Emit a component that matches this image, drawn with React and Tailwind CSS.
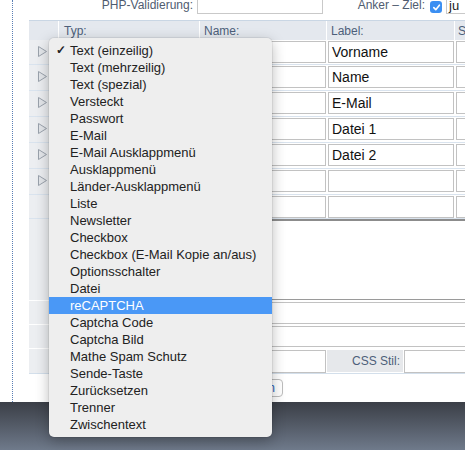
import React from 'react';

const menuItems = [
  'Text (einzeilig)',
  'Text (mehrzeilig)',
  'Text (spezial)',
  'Versteckt',
  'Passwort',
  'E-Mail',
  'E-Mail Ausklappmenü',
  'Ausklappmenü',
  'Länder-Ausklappmenü',
  'Liste',
  'Newsletter',
  'Checkbox',
  'Checkbox (E-Mail Kopie an/aus)',
  'Optionsschalter',
  'Datei',
  'reCAPTCHA',
  'Captcha Code',
  'Captcha Bild',
  'Mathe Spam Schutz',
  'Sende-Taste',
  'Zurücksetzen',
  'Trenner',
  'Zwischentext',
];

const rows = [
  { label: 'Vorname', h: 'h-[25px]', arrow: true },
  { label: 'Name', h: 'h-[26px]', arrow: true },
  { label: 'E-Mail', h: 'h-[26px]', arrow: true },
  { label: 'Datei 1', h: 'h-[26px]', arrow: true },
  { label: 'Datei 2', h: 'h-[26px]', arrow: true },
  { label: '', h: 'h-[26px]', arrow: true },
  { label: '', h: 'h-[24px]', arrow: false },
];

const Arrow = () => (
  <svg width="9" height="11" viewBox="0 0 9 11">
    <polygon points="0.5,0.5 8.5,5.5 0.5,10.5" fill="#e3e6ea" stroke="#9aa2ac" strokeWidth="1" />
  </svg>
);

const Box = ({ className = '', children }) => (
  <div className={`border border-[#c2c2c2] bg-white ${className}`}>{children}</div>
);

const App = () => {
  return (
    <div className="w-[465px] h-[450px] relative overflow-hidden bg-white font-['Liberation_Sans',Arial,sans-serif]">
      <div className="h-[402px] ml-[12px] border-l border-dotted border-[#5a7fb5] pl-[16px] overflow-hidden">
        {/* top fields */}
        <div className="flex h-[20px] text-[12px] text-[#4f5c70]">
          <div className="w-[168px] -mt-[4px] h-[19px] leading-[19px] text-right pr-[4px] shrink-0">PHP-Validierung:</div>
          <div className="w-[126px] -mt-[5px] h-[19px] border border-[#c9c9c9] shrink-0" />
          <div className="w-[107px] -mt-[4px] h-[19px] leading-[19px] text-right pr-[5px] shrink-0">Anker – Ziel:</div>
          <div className="w-[12px] h-[12px] mt-[1px] rounded-[3px] bg-[#3b8ff2] flex items-center justify-center shrink-0">
            <svg width="9" height="9" viewBox="0 0 10 10">
              <path d="M2 5.2 L4.2 7.4 L8.2 2.4" fill="none" stroke="#fff" strokeWidth="1.8" strokeLinecap="round" strokeLinejoin="round" />
            </svg>
          </div>
          <div className="w-[40px] -mt-[5px] h-[19px] ml-[4px] border border-[#c9c9c9] leading-[19px] pl-[2px] text-[13px] text-[#222] shrink-0">ju</div>
        </div>

        {/* header */}
        <div className="flex h-[20px] bg-[#e4e8ee] border-t border-[#c9d6e4] text-[12px] text-[#4d5f7a] leading-[20px] w-[480px]">
          <div className="w-[30px] border-r border-white shrink-0" />
          <div className="w-[141px] border-r border-white pl-[5px] shrink-0">Typ:</div>
          <div className="w-[127px] border-r border-white pl-[4px] shrink-0">Name:</div>
          <div className="w-[128px] border-r border-white pl-[4px] shrink-0">Label:</div>
          <div className="pl-[3px]">Stil:</div>
        </div>

        {/* field rows */}
        {rows.map((r, i) => (
          <div key={i} className={`flex ${r.h} border-b border-[#d9e3ee] w-[480px]`}>
            <div className="w-[30px] bg-[#eceef1] flex items-start pt-[6px] pl-[9px] shrink-0 border-r border-white">
              {r.arrow && <Arrow />}
            </div>
            <div className="w-[141px] shrink-0 p-[1px]">
              <Box className="h-[22px]" />
            </div>
            <div className="w-[127px] shrink-0 p-[1px]">
              <Box className="h-[22px]" />
            </div>
            <div className="w-[128px] shrink-0 p-[1px]">
              <Box className="h-[22px] pl-[3px] text-[14px] leading-[20px] text-[#111]">{r.label}</Box>
            </div>
            <div className="flex-1 p-[1px]">
              <Box className="h-[22px]" />
            </div>
          </div>
        ))}

        {/* textarea */}
        <div className="flex h-[81px] w-[480px]">
          <div className="w-[30px] bg-[#eceef1] shrink-0" />
          <div className="flex-1 border-t-2 border-l border-[#8c8c8c] border-b border-b-[#9a9a9a]" />
        </div>

        {/* full width inputs */}
        <div className="flex h-[24px] w-[480px] border-t border-white">
          <div className="w-[30px] bg-[#eceef1] shrink-0" />
          <div className="flex-1 pt-[1px]">
            <Box className="h-[22px]" />
          </div>
        </div>
        <div className="flex h-[24px] w-[480px] border-t border-white">
          <div className="w-[30px] bg-[#eceef1] shrink-0" />
          <div className="flex-1 pt-[1px]">
            <Box className="h-[21px]" />
          </div>
        </div>
        <div className="flex h-[26px] w-[480px] border-t border-white border-b border-b-[#d3dfeb]">
          <div className="w-[30px] bg-[#eceef1] shrink-0" />
          <div className="w-[268px] shrink-0 p-[1px]">
            <Box className="h-[23px]" />
          </div>
          <div className="w-[76px] shrink-0 bg-[#e6e8eb] text-[12px] text-[#4d5f7a] text-right pr-[3px] leading-[23px] mt-[1px] mb-[1px]">CSS Stil:</div>
          <div className="flex-1 p-[1px]">
            <Box className="h-[23px]" />
          </div>
        </div>

        {/* button */}
        <div className="w-[254px] flex justify-end mt-[5px]">
          <button className="h-[18px] px-[7px] rounded-[4px] border border-[#bdbdbd] bg-white text-[12px] text-[#2a5fb8] leading-[16px]">
            Speichern
          </button>
        </div>
      </div>

      {/* desktop below */}
      <div className="h-[48px] bg-linear-to-b from-[#3b3f47] to-[#6f7a8b]" />

      {/* dropdown menu overlay */}
      <div className="absolute left-[49px] top-[38px] w-[223px] rounded-[5px] bg-[#eeeeee] py-[4px] shadow-[0_4px_14px_rgba(0,0,0,0.28),0_0_0_1px_rgba(0,0,0,0.06)] text-[13px] text-[#222]">
        {menuItems.map((item, i) => (
          <div
            key={item}
            className={`relative h-[17px] leading-[17px] pl-[21px] whitespace-nowrap ${
              item === 'reCAPTCHA' ? 'bg-[#4a98f6] text-white' : ''
            }`}
          >
            {i === 0 && <span className="absolute left-[7px] top-0 text-[12px] font-bold">✓</span>}
            {item}
          </div>
        ))}
      </div>
    </div>
  );
};

export default App;
